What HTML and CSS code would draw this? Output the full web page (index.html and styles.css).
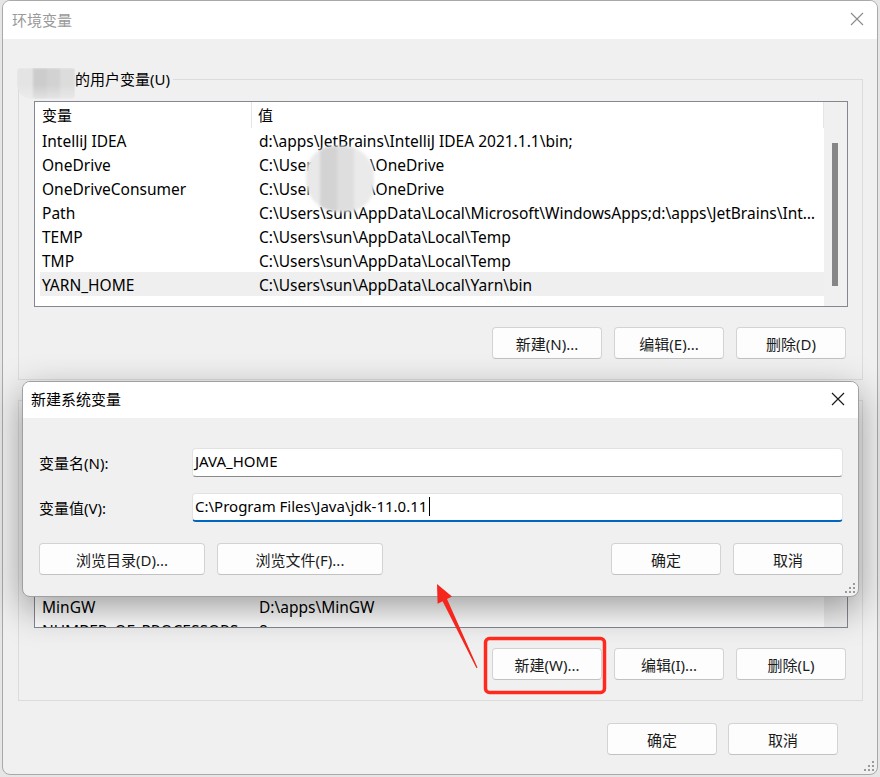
FILE: index.html
```html
<!DOCTYPE html>
<html lang="zh-CN">
<head>
<meta charset="utf-8">
<title>环境变量</title>
<link rel="stylesheet" href="styles.css">
</head>
<body>
<div class="window">
  <div class="titlebar">
    <span class="title">环境变量</span>
    <svg class="close" width="14" height="14" viewBox="0 0 14 14"><path d="M1 1L13 13M13 1L1 13" stroke="#8a8a8a" stroke-width="1.1" fill="none"/></svg>
  </div>
  <div class="content">
    <div class="group">
      <div class="legend"><span class="blurname"></span>的用户变量(U)</div>
      <div class="list">
        <div class="cols">
          <div class="header"><div class="h1">变量</div><div class="h2">值</div></div>
          <div class="row"><div class="c1">IntelliJ IDEA</div><div class="c2">d:\apps\JetBrains\IntelliJ IDEA 2021.1.1\bin;</div></div>
          <div class="row"><div class="c1">OneDrive</div><div class="c2">C:\Users\<span class="masked">sun</span>\OneDrive</div></div>
          <div class="row"><div class="c1">OneDriveConsumer</div><div class="c2">C:\Users\<span class="masked">sun</span>\OneDrive</div></div>
          <div class="row"><div class="c1">Path</div><div class="c2">C:\Users\sun\AppData\Local\Microsoft\WindowsApps;d:\apps\JetBrains\IntelliJ IDEA 2021.1.1\bin;</div></div>
          <div class="row"><div class="c1">TEMP</div><div class="c2">C:\Users\sun\AppData\Local\Temp</div></div>
          <div class="row"><div class="c1">TMP</div><div class="c2">C:\Users\sun\AppData\Local\Temp</div></div>
          <div class="row sel"><div class="c1">YARN_HOME</div><div class="c2">C:\Users\sun\AppData\Local\Yarn\bin</div></div>
        </div>
        <div class="scroll"><div class="thumb"></div></div>
        <div class="blob"></div>
      </div>
      <div class="buttons">
        <button class="btn">新建(N)...</button>
        <button class="btn">编辑(E)...</button>
        <button class="btn">删除(D)</button>
      </div>
    </div>

    <div class="group sys">
      <div class="legend hidden-legend"></div>
      <div class="list">
        <div class="cols scrolled">
          <div class="row"><div class="c1">MinGW</div><div class="c2">D:\apps\MinGW</div></div>
          <div class="row"><div class="c1">NUMBER_OF_PROCESSORS</div><div class="c2">8</div></div>
        </div>
        <div class="scroll"></div>
      </div>
      <div class="buttons">
        <button class="btn">新建(W)...</button>
        <button class="btn">编辑(I)...</button>
        <button class="btn">删除(L)</button>
      </div>
    </div>

    <div class="footer">
      <button class="btn">确定</button>
      <button class="btn">取消</button>
    </div>
  </div>
  <div class="grip main-grip"><i></i><i></i><i></i><i></i><i></i><i></i></div>
</div>

<div class="dialog">
  <div class="dtitle">
    <span>新建系统变量</span>
    <svg class="close" width="14" height="14" viewBox="0 0 14 14"><path d="M1 1L13 13M13 1L1 13" stroke="#1a1a1a" stroke-width="1.2" fill="none"/></svg>
  </div>
  <div class="dbody">
    <div class="field">
      <label class="flabel">变量名(N):</label>
      <div class="input">JAVA_HOME</div>
    </div>
    <div class="field">
      <label class="flabel">变量值(V):</label>
      <div class="input focus">C:\Program Files\Java\jdk-11.0.11<span class="caret"></span></div>
    </div>
    <div class="dbuttons">
      <button class="btn wide">浏览目录(D)...</button>
      <button class="btn wide">浏览文件(F)...</button>
      <span class="spacer"></span>
      <button class="btn">确定</button>
      <button class="btn">取消</button>
    </div>
  </div>
  <div class="grip"><i></i><i></i><i></i><i></i><i></i><i></i></div>
</div>

<svg class="annot" width="880" height="777" viewBox="0 0 880 777">
  <rect x="485.5" y="638.5" width="119" height="54" rx="4" ry="4" fill="none" stroke="#ff2a1e" stroke-width="3.5"/>
  <polygon points="437,584 452,596.5 447,599 477.5,667.5 476.5,668.2 442.6,601.3 437.6,603.8" fill="#f5261c"/>
</svg>
</body>
</html>
```
FILE: styles.css
```css
* { box-sizing: border-box; }
html, body { margin: 0; padding: 0; }
body {
  width: 880px;
  height: 777px;
  overflow: hidden;
  background: #e6e6e6;
  font-family: "Noto Sans", "Noto Sans CJK SC", sans-serif;
  font-size: 15px;
  color: #000;
  position: relative;
}
.window {
  margin-left: 2px;
  width: 876px;
  height: 775px;
  border: 1px solid #a9a9a9;
  border-radius: 8px;
  background: #f0f0f0;
  overflow: hidden;
  position: relative;
}
.titlebar {
  height: 38px;
  background: #fff;
  display: flex;
  align-items: center;
  justify-content: space-between;
  padding: 0 13px 2px 9px;
}
.title { color: #9a9a9a; font-size: 15px; }
.content {
  padding: 0 14px 0 15px;
  display: flex;
  flex-direction: column;
}
.group {
  margin-top: 40px;
  height: 301px;
  border: 1px solid #dcdcdc;
  padding: 0 14px 0 15px;
  display: flex;
  flex-direction: column;
}
.group.sys { margin-top: 20px; }
.legend {
  margin-top: -11px;
  margin-left: -17px;
  height: 20px;
  line-height: 20px;
  background: #f0f0f0;
  align-self: flex-start;
  padding-right: 3px;
  display: flex;
  align-items: center;
  color: #000;
}
.hidden-legend { margin-left: -8px; width: 90px; }
.blurname {
  display: inline-block;
  width: 58px;
  height: 31px;
  margin-top: 9px;
  border-radius: 2px 2px 4px 14px;
  background:
    linear-gradient(90deg, #e3e3e3 0 28%, #c9c9c9 28% 52%, #cfcfcf 52% 75%, #dadada 75% 100%);
  filter: blur(1.2px);
  opacity: 0.9;
  -webkit-mask-image: linear-gradient(180deg, #000 0 55%, rgba(0,0,0,0.4) 100%);
}
.list {
  margin-top: 12px;
  height: 206px;
  border: 1px solid #828790;
  background: #fff;
  display: flex;
  position: relative;
  overflow: hidden;
}
.cols { flex: 1; min-width: 0; display: flex; flex-direction: column; }
.cols.scrolled { padding-top: 171px; }
.header { height: 26px; display: flex; line-height: 26px; flex: none; }
.h1 { width: 217px; padding-left: 7px; border-right: 1px solid #e5e5e5; }
.h2 { flex: 1; padding-left: 6px; border-right: 1px solid #e5e5e5; }
.row {
  height: 24px;
  line-height: 26px;
  margin-left: 5px;
  display: flex;
  flex: none;
  white-space: nowrap;
  font-size: 15.5px;
}
.row.sel { background: #efefef; }
.c1 { width: 213px; flex: none; padding-left: 2px; overflow: hidden; height: 24px; }
.c2 { flex: 1; min-width: 0; padding-left: 6px; overflow: hidden; text-overflow: ellipsis; padding-right: 4px; height: 24px; }
.masked { display: inline-block; width: 44px; }
.scroll { width: 23px; background: #f0f0f0; flex: none; }
.thumb {
  margin: 41px 0 0 8px;
  width: 6px;
  height: 143px;
  background: #868686;
}
.blob {
  position: absolute;
  left: 271px;
  top: 44px;
  width: 68px;
  height: 66px;
  border-radius: 42% 45% 40% 48%;
  background:
    linear-gradient(90deg, #e9e9e9 0 20%, #d3d3d3 20% 45%, #dedede 45% 70%, #eaeaea 70% 100%);
  filter: blur(1.5px);
}
.buttons {
  margin-top: 20px;
  display: flex;
  justify-content: flex-end;
  gap: 12px;
  padding-right: 2px;
}
.btn {
  width: 110px;
  height: 32px;
  font: inherit;
  color: #1b1b1b;
  background: #fdfdfd;
  border: 1px solid #d3d3d3;
  border-bottom-color: #c2c2c2;
  border-radius: 4px;
  padding: 0;
}
.btn.wide { width: 166px; }
.footer {
  margin-top: 22px;
  display: flex;
  justify-content: flex-end;
  gap: 11px;
  padding-right: 25px;
}
.grip {
  position: absolute;
  right: 3px;
  bottom: 3px;
  width: 10px;
  height: 10px;
}
.grip i {
  position: absolute;
  width: 2px;
  height: 2px;
  background: #9a9a9a;
}
.grip i:nth-child(1) { right: 0; bottom: 0; }
.grip i:nth-child(2) { right: 4px; bottom: 0; }
.grip i:nth-child(3) { right: 8px; bottom: 0; }
.grip i:nth-child(4) { right: 0; bottom: 4px; }
.grip i:nth-child(5) { right: 4px; bottom: 4px; }
.grip i:nth-child(6) { right: 0; bottom: 8px; }

.dialog {
  position: absolute;
  left: 22px;
  top: 381px;
  width: 837px;
  height: 216px;
  border: 1px solid #a0a0a0;
  border-radius: 8px;
  overflow: hidden;
  background: #f0f0f0;
  box-shadow: 0 12px 36px rgba(0, 0, 0, 0.38);
  display: flex;
  flex-direction: column;
}
.dtitle {
  height: 36px;
  background: #fff;
  display: flex;
  align-items: center;
  justify-content: space-between;
  padding: 0 13px 3px 8px;
  flex: none;
}
.dbody {
  flex: 1;
  padding: 30px 15px 0 16px;
  display: flex;
  flex-direction: column;
}
.field { display: flex; align-items: center; margin-bottom: 16px; }
.flabel { width: 153px; }
.input {
  width: 651px;
  height: 29px;
  background: #fff;
  border: 1px solid #e2e2e2;
  border-bottom: 1px solid #8a8a8a;
  border-radius: 4px;
  padding-left: 2px;
  padding-bottom: 2px;
  line-height: 25px;
  display: flex;
  align-items: center;
  white-space: nowrap;
}
.input.focus { border-bottom: 2px solid #0067c0; padding-bottom: 1px; }
.caret {
  display: inline-block;
  width: 1px;
  height: 19px;
  background: #000;
  margin-left: 2px;
}
.dbuttons {
  margin-top: 5px;
  display: flex;
  gap: 12px;
}
.spacer { flex: 1; }
.annot { position: absolute; left: 0; top: 0; pointer-events: none; }
```
